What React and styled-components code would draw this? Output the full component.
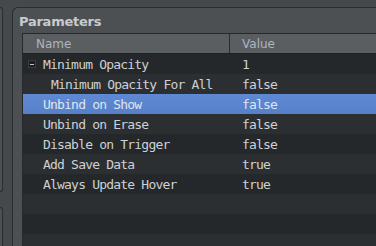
import React from 'react';
import styled, { createGlobalStyle } from 'styled-components';

const GlobalStyle = createGlobalStyle`
  html, body {
    margin: 0;
    padding: 0;
    background: #46494c;
    overflow: hidden;
  }
  #root {
    width: 376px;
    height: 246px;
    overflow: hidden;
  }
`;

const Desk = styled.div`
  display: flex;
  height: 246px;
  padding-top: 7px;
  box-sizing: border-box;
  background: #46494c;
`;

const SideDock = styled.div`
  display: flex;
  flex-direction: column;
  gap: 15px;
  width: 3px;
  flex-shrink: 0;
`;

const SideStub = styled.div`
  height: ${(p) => p.h}px;
  flex-shrink: 0;
  background: #4d5053;
  border: 1px solid #2a2c2e;
  border-left: none;
  border-radius: 0 4px 4px 0;
`;

const Panel = styled.div`
  margin-left: 9px;
  flex: 1;
  min-width: 0;
  display: flex;
  flex-direction: column;
  background: #4d5053;
  border: 1px solid #2a2c2e;
  border-right: none;
  border-bottom: none;
  border-radius: 6px 0 0 0;
`;

const PanelTitle = styled.div`
  height: 25px;
  padding-left: 6px;
  font-family: "DejaVu Sans", sans-serif;
  font-weight: bold;
  font-size: 13px;
  letter-spacing: -0.25px;
  line-height: 28px;
  color: #c6cbd0;
`;

const Tree = styled.div`
  flex: 1;
  margin-left: 9px;
  border-left: 1px solid #26282a;
  border-top: 1px solid #26282a;
  background: #25282b;
  overflow: hidden;
`;

const HeaderRow = styled.div`
  display: flex;
  height: 19px;
  background: #5b5e61;
  border-bottom: 1px solid #1f2123;
  font-family: "DejaVu Sans", sans-serif;
  font-size: 12px;
  line-height: 21px;
  color: #aab5c0;
`;

const HeaderCell = styled.div`
  box-sizing: border-box;
  width: ${(p) => (p.w ? `${p.w}px` : 'auto')};
  flex: ${(p) => (p.w ? 'none' : 1)};
  padding-left: ${(p) => p.pad}px;
  border-right: ${(p) => (p.divider ? '1px solid #2a2c2e' : 'none')};
`;

const Row = styled.div`
  display: flex;
  height: 20px;
  box-sizing: border-box;
  padding-top: 2px;
  background: ${(p) =>
    p.selected
      ? 'linear-gradient(#6089d3, #5580ca)'
      : p.odd
      ? '#2c2f32'
      : '#25282b'};
  font-family: "DejaVu Sans Mono", monospace;
  font-size: 13px;
  letter-spacing: -0.8px;
  line-height: 18px;
  color: ${(p) => (p.selected ? '#dfe6ef' : '#cdd1d5')};
  white-space: nowrap;
`;

const NameCell = styled.div`
  width: 207px;
  flex: none;
  display: flex;
  align-items: center;
  padding-left: ${(p) => p.pad}px;
  box-sizing: border-box;
  overflow: hidden;
`;

const ValueCell = styled.div`
  flex: 1;
  padding-left: 12px;
`;

const Expander = styled.span`
  width: 8px;
  height: 8px;
  box-sizing: border-box;
  margin-right: 7px;
  margin-top: -2px;
  background: #1b1d20;
  border: 1px solid #3b3e41;
  display: flex;
  align-items: center;
  justify-content: center;
  &::after {
    content: '';
    width: 4px;
    height: 1px;
    background: #c4c8cc;
  }
`;

const rows = [
  { name: 'Minimum Opacity', value: '1', level: 0, expanded: true },
  { name: 'Minimum Opacity For All', value: 'false', level: 1 },
  { name: 'Unbind on Show', value: 'false', level: 0, selected: true },
  { name: 'Unbind on Erase', value: 'false', level: 0 },
  { name: 'Disable on Trigger', value: 'false', level: 0 },
  { name: 'Add Save Data', value: 'true', level: 0 },
  { name: 'Always Update Hover', value: 'true', level: 0 },
  { name: '', value: '' },
  { name: '', value: '' },
  { name: '', value: '' },
];

export default function App() {
  return (
    <>
      <GlobalStyle />
      <Desk>
        <SideDock>
          <SideStub h={183} />
          <SideStub h={60} />
        </SideDock>
        <Panel>
          <PanelTitle>Parameters</PanelTitle>
          <Tree>
            <HeaderRow>
              <HeaderCell w={207} pad={13} divider>Name</HeaderCell>
              <HeaderCell pad={12}>Value</HeaderCell>
            </HeaderRow>
            {rows.map((r, i) => (
              <Row key={`row-${i}`} odd={i % 2 === 1} selected={r.selected}>
                <NameCell pad={r.expanded ? 5 : 20 + (r.level || 0) * 8}>
                  {r.expanded && <Expander />}
                  {r.name}
                </NameCell>
                <ValueCell>{r.value}</ValueCell>
              </Row>
            ))}
          </Tree>
        </Panel>
      </Desk>
    </>
  );
}
